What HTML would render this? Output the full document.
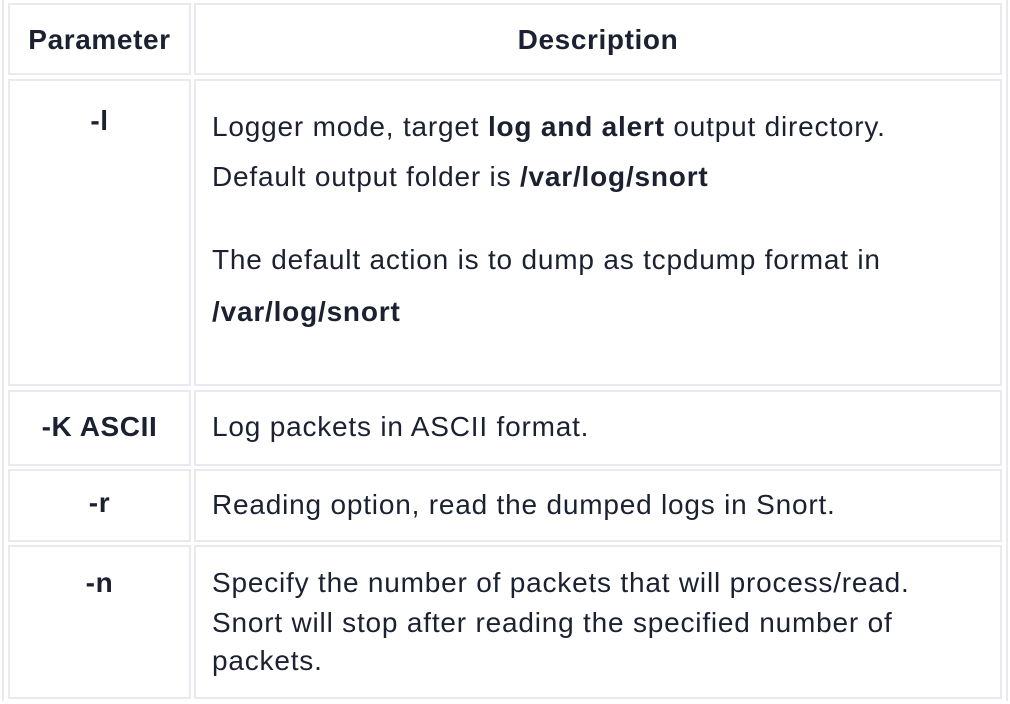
<!DOCTYPE html>
<html><head><style>
body{margin:0;width:1010px;height:704px;background:#fff;position:relative;overflow:hidden;font-family:"Liberation Sans",sans-serif;color:#1b2130;font-size:28px;letter-spacing:0.8px}
.b{position:absolute;border:2px solid #e9e9ef;box-sizing:border-box}
.t{position:absolute;height:30px;line-height:30px;white-space:nowrap}
.c{text-align:center;font-weight:bold;letter-spacing:0.6px}
b{font-weight:bold}
</style></head><body>
<div class="b" style="left:2px;top:-4px;width:1006px;height:705px;border-width:0 2px"></div>
<div class="b" style="left:8px;top:3px;width:183px;height:72px"></div>
<div class="b" style="left:194px;top:3px;width:808px;height:72px"></div>
<div class="b" style="left:8px;top:79px;width:183px;height:307px"></div>
<div class="b" style="left:194px;top:79px;width:808px;height:307px"></div>
<div class="b" style="left:8px;top:390px;width:183px;height:76px"></div>
<div class="b" style="left:194px;top:390px;width:808px;height:76px"></div>
<div class="b" style="left:8px;top:469px;width:183px;height:73px"></div>
<div class="b" style="left:194px;top:469px;width:808px;height:73px"></div>
<div class="b" style="left:8px;top:545px;width:183px;height:154px"></div>
<div class="b" style="left:194px;top:545px;width:808px;height:154px"></div>

<div class="t c" style="left:8px;width:183px;top:25px">Parameter</div>
<div class="t c" style="left:194px;width:808px;top:25px">Description</div>
<div class="t c" style="left:8px;width:183px;top:106px">-l</div>
<div class="t" style="left:212px;top:112px">Logger mode, target <b>log and alert</b> output directory.</div>
<div class="t" style="left:212px;top:162px">Default output folder is <b>/var/log/snort</b></div>
<div class="t" style="left:212px;top:245px">The default action is to dump as tcpdump format in</div>
<div class="t" style="left:212px;top:297px"><b>/var/log/snort</b></div>
<div class="t c" style="left:8px;width:183px;top:412px">-K ASCII</div>
<div class="t" style="left:212px;top:412px">Log packets in ASCII format.</div>
<div class="t c" style="left:8px;width:183px;top:488px">-r</div>
<div class="t" style="left:212px;top:490px">Reading option, read the dumped logs in Snort.</div>
<div class="t c" style="left:8px;width:183px;top:568px">-n</div>
<div class="t" style="left:212px;top:568px">Specify the number of packets that will process/read.</div>
<div class="t" style="left:212px;top:608px">Snort will stop after reading the specified number of</div>
<div class="t" style="left:212px;top:646px">packets.</div>
</body></html>
